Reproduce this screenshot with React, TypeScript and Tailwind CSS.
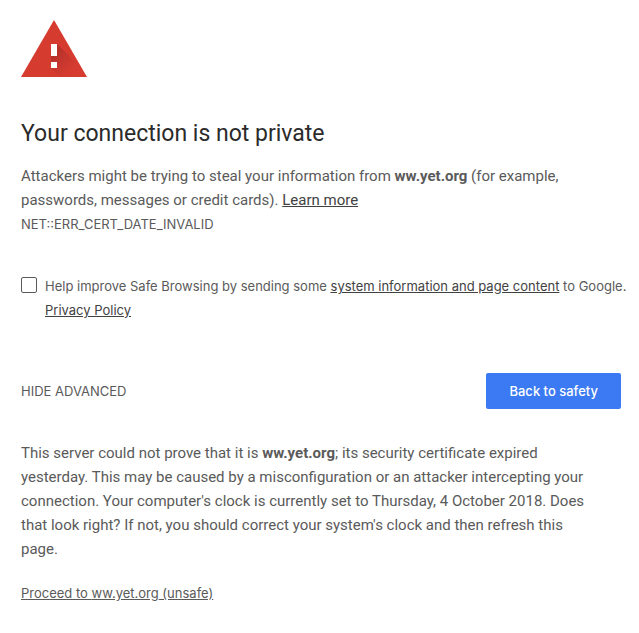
import { useState } from "react";

const HOST = "ww.yet.org";

function WarningIcon() {
  return (
    <svg width="66" height="57" viewBox="0 0 66 57" aria-hidden="true">
      <defs>
        <linearGradient id="shade" x1="32" y1="32" x2="50" y2="50" gradientUnits="userSpaceOnUse">
          <stop offset="0" stopColor="#b5312a" />
          <stop offset="1" stopColor="#d63b30" />
        </linearGradient>
      </defs>
      <path d="M33 0 66 57H0Z" fill="#d63b30" />
      <path d="M36 24 55 43 63 57H39L30 48V24Z" fill="url(#shade)" />
      <path d="M30 24h6v12h-6zM30 42h6v6h-6z" fill="#fff" />
    </svg>
  );
}

export default function App() {
  const [showAdvanced, setShowAdvanced] = useState(true);
  const [reporting, setReporting] = useState(false);

  return (
    <main className="mx-auto max-w-2xl pt-5 pr-[18px] pb-7 pl-[21px] font-[Inter,sans-serif] text-[13px] leading-6 text-[#5a5a5a]">
      <WarningIcon />
      <h1 className="mt-[41px] font-[Roboto,sans-serif] text-[23px] leading-8 text-[#2b2b2b]">
        Your connection is not private
      </h1>
      <p className="mt-3.5 pr-5 font-[Roboto,sans-serif] text-[15px] leading-6">
        Attackers might be trying to steal your information from <strong>{HOST}</strong> (for example, passwords,
        messages or credit cards).{" "}
        <a href="#learn-more" className="text-[#424242] underline">
          Learn more
        </a>
      </p>
      <div>NET::ERR_CERT_DATE_INVALID</div>

      <div className="mt-[38px] -mr-3 flex gap-2">
        <input
          id="report"
          type="checkbox"
          checked={reporting}
          onChange={(e) => setReporting(e.target.checked)}
          className="mt-[3px] size-4 shrink-0 appearance-none rounded-xs border border-[#5a5a5a] bg-white checked:bg-[#4285f4]"
        />
        <label htmlFor="report">
          Help improve Safe Browsing by sending some{" "}
          <a href="#details" className="text-[#424242] underline">
            system information and page content
          </a>{" "}
          to Google.{" "}
          <a href="#privacy" className="text-[#424242] underline">
            Privacy Policy
          </a>
        </label>
      </div>

      <div className="mt-[51px] flex items-center justify-between">
        <button type="button" onClick={() => setShowAdvanced(!showAdvanced)} className="uppercase">
          {showAdvanced ? "Hide advanced" : "Advanced"}
        </button>
        <button type="button" className="h-9 rounded-xs bg-[#3b7af2] px-[23px] font-medium text-white">
          Back to safety
        </button>
      </div>

      {showAdvanced && (
        <div className="mt-8">
          <p className="pr-5 font-[Roboto,sans-serif] text-[15px] leading-6">
            This server could not prove that it is <strong>{HOST}</strong>; its security certificate expired yesterday.
            This may be caused by a misconfiguration or an attacker intercepting your connection. Your computer's clock
            is currently set to Thursday, 4 October 2018. Does that look right? If not, you should correct your
            system's clock and then refresh this page.
          </p>
          <p className="mt-5">
            <a href="#proceed" className="underline">
              Proceed to {HOST} (unsafe)
            </a>
          </p>
        </div>
      )}
    </main>
  );
}
